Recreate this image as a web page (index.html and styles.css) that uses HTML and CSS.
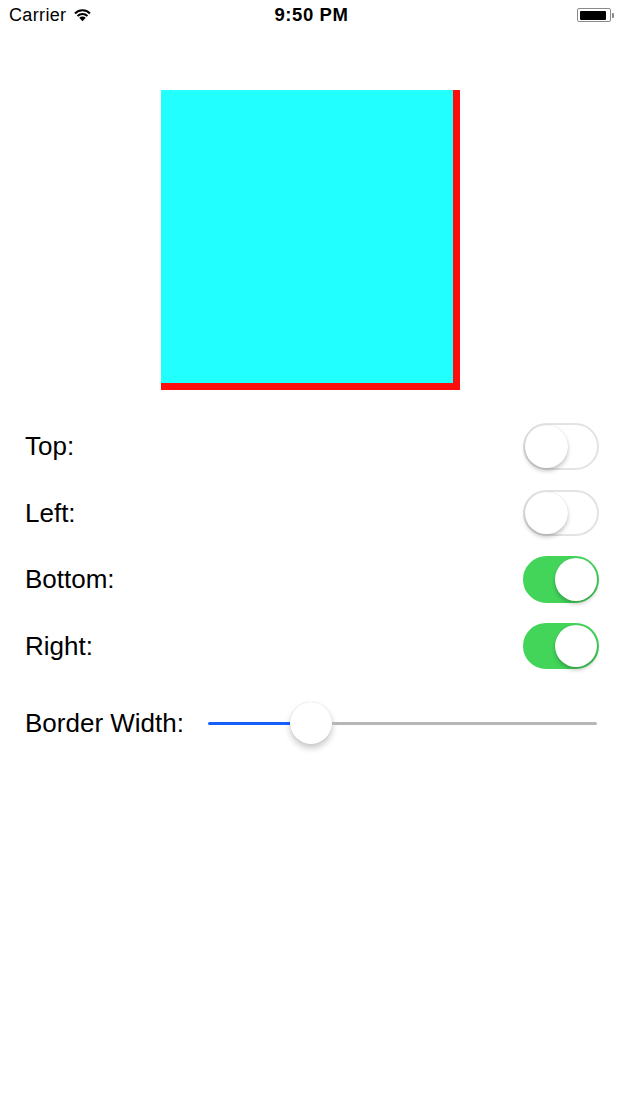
FILE: index.html
```html
<!DOCTYPE html>
<html>
<head>
<meta charset="utf-8">
<link rel="stylesheet" href="styles.css">
</head>
<body>
<div class="screen">
  <div class="statusbar">
    <div class="sb-left">
      <span class="carrier">Carrier</span>
      <svg class="wifi" width="21" height="15" viewBox="0 0 20 14">
        <path d="M10 13.5 L6.9 10.2 A4.4 4.4 0 0 1 13.1 10.2 Z" fill="#000"/>
        <path d="M4.6 7.8 A7.6 7.6 0 0 1 15.4 7.8 L14.1 9.2 A5.7 5.7 0 0 0 5.9 9.2 Z" fill="#000"/>
        <path d="M2.2 5.3 A11 11 0 0 1 17.8 5.3 L16.5 6.7 A9.1 9.1 0 0 0 3.5 6.7 Z" fill="#000"/>
      </svg>
    </div>
    <div class="time">9:50 PM</div>
    <div class="sb-right">
      <div class="battery"><div class="battery-fill"></div></div>
      <div class="battery-nub"></div>
    </div>
  </div>

  <div class="preview"></div>

  <div class="options">
    <div class="row">
      <span class="label">Top:</span>
      <div class="switch"><div class="knob"></div></div>
    </div>
    <div class="row">
      <span class="label">Left:</span>
      <div class="switch"><div class="knob"></div></div>
    </div>
    <div class="row">
      <span class="label">Bottom:</span>
      <div class="switch on"><div class="knob"></div></div>
    </div>
    <div class="row">
      <span class="label">Right:</span>
      <div class="switch on"><div class="knob"></div></div>
    </div>
  </div>

  <div class="slider-row">
    <span class="label">Border Width:</span>
    <div class="slider">
      <div class="track-min" style="width:82px"></div>
      <div class="thumb"></div>
      <div class="track-max"></div>
    </div>
  </div>
</div>
</body>
</html>
```

FILE: styles.css
```css
html, body {
  margin: 0;
  padding: 0;
  background: #fff;
}
.screen {
  width: 621px;
  height: 1104px;
  background: #fff;
  font-family: "Liberation Sans", Arial, sans-serif;
  color: #000;
  overflow: hidden;
}
.statusbar {
  height: 30px;
  display: flex;
  align-items: center;
  justify-content: space-between;
  padding: 0 7px 0 9px;
}
.sb-left {
  display: flex;
  align-items: center;
  gap: 6px;
  width: 120px;
}
.carrier {
  font-size: 18px;
  letter-spacing: 0.35px;
}
.wifi {
  margin-top: -1px;
}
.time {
  font-size: 18.5px;
  font-weight: bold;
  letter-spacing: 0.6px;
}
.sb-right {
  width: 120px;
  display: flex;
  justify-content: flex-end;
  align-items: center;
}
.battery {
  width: 34px;
  height: 14px;
  box-sizing: border-box;
  border: 1px solid #8a8a8a;
  border-radius: 2px;
  padding: 1.5px;
}
.battery-fill {
  width: 26px;
  height: 100%;
  background: #000;
  border-radius: 1px;
}
.battery-nub {
  width: 2px;
  height: 5px;
  background: #8a8a8a;
  border-radius: 0 1px 1px 0;
  margin-left: 1px;
}
.preview {
  width: 299px;
  height: 300px;
  box-sizing: border-box;
  margin: 60px auto 0;
  background: #21ffff;
  border-right: 7px solid #ff0d0d;
  border-bottom: 7px solid #ff0d0d;
}
.options {
  margin-top: 33px;
  display: flex;
  flex-direction: column;
  gap: 20px;
  padding: 0 22px 0 25px;
}
.row {
  height: 46.5px;
  display: flex;
  align-items: center;
  justify-content: space-between;
}
.label {
  font-size: 26px;
  line-height: 30px;
}
.switch {
  width: 76px;
  height: 46.5px;
  box-sizing: border-box;
  border-radius: 24px;
  border: 2px solid #e3e3e3;
  background: #fff;
  display: flex;
  align-items: center;
  justify-content: flex-start;
}
.switch .knob {
  width: 42.5px;
  height: 42.5px;
  border-radius: 50%;
  background: #fff;
  box-shadow: 0 3px 4px rgba(0,0,0,0.22), 0 0 1px rgba(0,0,0,0.18);
}
.switch.on {
  background: #43d55a;
  border-color: #43d55a;
  justify-content: flex-end;
}
.slider-row {
  margin-top: 33px;
  display: flex;
  align-items: center;
  padding: 0 24px 0 25px;
  height: 42px;
}
.slider-row .label {
  margin-right: 24px;
}
.slider {
  flex: 1;
  display: flex;
  align-items: center;
  height: 42px;
}
.track-min {
  height: 3px;
  background: #1560fb;
  border-radius: 2px 0 0 2px;
}
.track-max {
  flex: 1;
  height: 3px;
  background: #b6b6b6;
  border-radius: 0 2px 2px 0;
}
.thumb {
  width: 42px;
  height: 42px;
  flex: none;
  border-radius: 50%;
  background: #fff;
  box-shadow: 0 4px 6px rgba(0,0,0,0.22), 0 0 1px rgba(0,0,0,0.2);
}
```
